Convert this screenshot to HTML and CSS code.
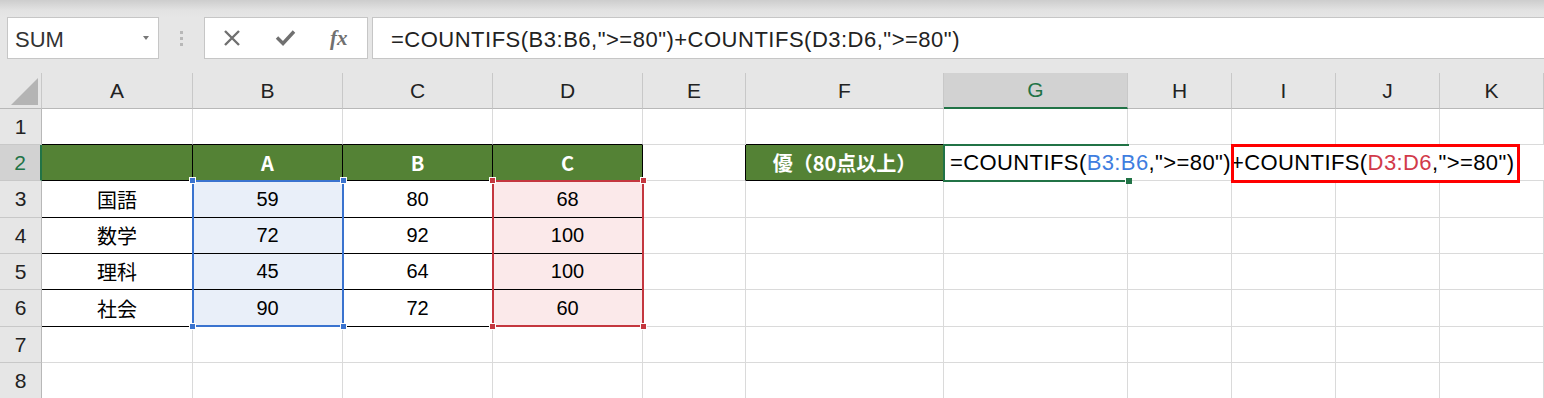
FILE: index.html
```html
<!DOCTYPE html>
<html lang="ja">
<head>
    <meta charset="UTF-8">
    <title>COUNTIFS</title>
    <link rel="stylesheet" href="styles.css">
</head>
<body>
    <div class="topband"></div>

    <!-- 数式バー -->
    <div class="fbar">
        <div class="namebox">SUM<span class="arrow"></span></div>
        <div class="grip"><i></i><i></i><i></i></div>
        <div class="btns">
            <svg width="18" height="18" viewBox="0 0 18 18"><path d="M2 2L16 16M16 2L2 16" stroke="#707070" stroke-width="2.4" fill="none"/></svg>
            <svg width="21" height="18" viewBox="0 0 21 18"><path d="M2 8.5L8 14.5L19 2.5" stroke="#707070" stroke-width="3.4" fill="none"/></svg>
            <span class="fx">fx</span>
        </div>
        <div class="formula">=COUNTIFS(B3:B6,"&gt;=80")+COUNTIFS(D3:D6,"&gt;=80")</div>
    </div>

    <!-- シート -->
    <div class="sheet">
        <div class="hd corner"><span class="tri"></span></div>
        <div class="hd">A</div><div class="hd">B</div><div class="hd">C</div><div class="hd">D</div>
        <div class="hd">E</div><div class="hd">F</div><div class="hd sel">G</div><div class="hd">H</div>
        <div class="hd">I</div><div class="hd">J</div><div class="hd">K</div>

        <div class="rh">1</div>
        <div class="c bk"></div><div class="c bk"></div><div class="c bk"></div><div class="c bk"></div>
        <div class="c"></div><div class="c bk"></div><div class="c"></div><div class="c"></div>
        <div class="c"></div><div class="c"></div><div class="c"></div>

        <div class="rh rsel">2</div>
        <div class="c th"></div><div class="c th">A</div><div class="c th">B</div><div class="c th">C</div>
        <div class="c bk-r"></div><div class="c th">優（80点以上）</div>
        <div class="c edit">=COUNTIFS(<span class="blue">B3:B6</span>,"&gt;=80")+COUNTIFS(<span class="red">D3:D6</span>,"&gt;=80")</div>

        <div class="rh">3</div>
        <div class="c bk">国語</div><div class="c bk rb">59</div><div class="c bk">80</div><div class="c bk rr">68</div>
        <div class="c"></div><div class="c"></div><div class="c"></div><div class="c"></div>
        <div class="c"></div><div class="c"></div><div class="c"></div>

        <div class="rh">4</div>
        <div class="c bk">数学</div><div class="c bk rb">72</div><div class="c bk">92</div><div class="c bk rr">100</div>
        <div class="c"></div><div class="c"></div><div class="c"></div><div class="c"></div>
        <div class="c"></div><div class="c"></div><div class="c"></div>

        <div class="rh">5</div>
        <div class="c bk">理科</div><div class="c bk rb">45</div><div class="c bk">64</div><div class="c bk rr">100</div>
        <div class="c"></div><div class="c"></div><div class="c"></div><div class="c"></div>
        <div class="c"></div><div class="c"></div><div class="c"></div>

        <div class="rh">6</div>
        <div class="c bk">社会</div><div class="c bk rb">90</div><div class="c bk">72</div><div class="c bk rr">60</div>
        <div class="c"></div><div class="c"></div><div class="c"></div><div class="c"></div>
        <div class="c"></div><div class="c"></div><div class="c"></div>

        <div class="rh">7</div>
        <div class="c"></div><div class="c"></div><div class="c"></div><div class="c"></div>
        <div class="c"></div><div class="c"></div><div class="c"></div><div class="c"></div>
        <div class="c"></div><div class="c"></div><div class="c"></div>

        <div class="rh">8</div>
        <div class="c"></div><div class="c"></div><div class="c"></div><div class="c"></div>
        <div class="c"></div><div class="c"></div><div class="c"></div><div class="c"></div>
        <div class="c"></div><div class="c"></div><div class="c"></div>

        <!-- 参照範囲と選択セル -->
        <div class="range range-b"><i class="tl"></i><i class="tr"></i><i class="bl"></i><i class="br"></i></div>
        <div class="range range-d"><i class="tl"></i><i class="tr"></i><i class="bl"></i><i class="br"></i></div>
        <div class="cursor"><i></i></div>
        <div class="mark"></div>
    </div>
</body>
</html>
```

FILE: styles.css
```css
body {
    margin: 0;
    background-color: #e6e6e6;
    font-family: "Liberation Sans", "Noto Sans CJK JP", sans-serif;
    overflow: hidden;
}
.topband {
    height: 17px;
    background: linear-gradient(#cdcdcd, #e2e2e2 60%, #e6e6e6);
}
.fbar {
    display: flex;
    height: 42px;
    padding: 0 0 14px 7px;
}
.namebox {
    position: relative;
    box-sizing: border-box;
    width: 152px;
    height: 42px;
    background: #fff;
    border: 1px solid #c6c6c6;
    padding: 2px 0 0 7px;
    font-size: 22px;
    line-height: 40px;
    color: #333;
}
.arrow {
    position: absolute;
    right: 9px;
    top: 18px;
    border-left: 3px solid transparent;
    border-right: 3px solid transparent;
    border-top: 4px solid #777;
}
.grip {
    width: 45px;
    display: flex;
    flex-direction: column;
    align-items: center;
    justify-content: center;
    gap: 3px;
}
.grip i {
    width: 3px;
    height: 3px;
    background: #b8b8b8;
}
.btns {
    box-sizing: border-box;
    width: 164px;
    height: 42px;
    background: #fff;
    border: 1px solid #c6c6c6;
    display: flex;
    align-items: center;
    gap: 34px;
    padding-left: 18px;
}
.fx {
    font-family: "Liberation Serif", serif;
    font-style: italic;
    font-weight: bold;
    font-size: 21px;
    color: #707070;
}
.formula {
    box-sizing: border-box;
    flex: 1;
    margin-left: 4px;
    margin-right: -2px;
    height: 42px;
    background: #fff;
    border: 1px solid #c6c6c6;
    padding: 2px 0 0 18px;
    font-size: 22px;
    line-height: 40px;
    color: #222;
    letter-spacing: 0.5px;
}
.sheet {
    position: relative;
    display: grid;
    grid-template-columns: 42px 151px 150px 150px 150px 103px 198px 184px 104px 104px 104px 104px;
    grid-template-rows: 36px 36px 36px 37px 36px 36px 37px 36px 36px;
    background: #fff;
}
.sheet > div {
    box-sizing: border-box;
    display: flex;
    align-items: center;
    justify-content: center;
    white-space: nowrap;
}
.hd {
    background: #e6e6e6;
    border-right: 1px solid #c8c8c8;
    border-bottom: 1px solid #b8b8b8;
    font-size: 21px;
    color: #222;
}
.hd.sel {
    background: #d2d2d2;
    color: #217346;
    border-bottom: 2px solid #217346;
}
.corner {
    position: relative;
}
.tri {
    position: absolute;
    right: 3px;
    bottom: 3px;
    border-left: 27px solid transparent;
    border-bottom: 27px solid #b4b4b4;
}
.rh {
    background: #e6e6e6;
    border-right: 1px solid #b8b8b8;
    border-bottom: 1px solid #c8c8c8;
    font-size: 21px;
    color: #222;
}
.rh.rsel {
    background: #d2d2d2;
    color: #217346;
    border-right: 2px solid #217346;
}
.c {
    border-right: 1px solid #dadada;
    border-bottom: 1px solid #dadada;
    font-size: 20px;
    color: #000;
}
.c.bk {
    border-bottom-color: #000;
}
.c.bk-r {
    border-right-color: #000;
}
.c.th {
    background: #548235;
    border-right-color: #000;
    border-bottom-color: #000;
    color: #fff;
    font-weight: bold;
    font-family: "Noto Sans CJK JP", sans-serif;
    font-size: 20px;
}
.c.rb {
    background: #e9eff9;
}
.c.rr {
    background: #fbe9ea;
}
.c.edit {
    grid-column: 8 / span 5;
    justify-content: flex-start;
    padding-left: 6px;
    border-right: none;
    font-size: 22px;
    letter-spacing: 0.4px;
}
.blue {
    color: #3f7ee0;
}
.red {
    color: #d23a4a;
}
.range {
    position: absolute;
    top: 107px;
    width: 152px;
    height: 147px;
    box-sizing: border-box;
    border: 2px solid #3a73cf;
}
.range-b {
    left: 192px;
}
.range-d {
    left: 492px;
    border-color: #c4373f;
}
.range i {
    position: absolute;
    width: 5px;
    height: 5px;
    background: #3a73cf;
    border: 1px solid #fff;
}
.range-d i {
    background: #c4373f;
}
.range .tl { left: -5px; top: -5px; }
.range .tr { right: -5px; top: -5px; }
.range .bl { left: -5px; bottom: -5px; }
.range .br { right: -5px; bottom: -5px; }
.cursor {
    position: absolute;
    left: 943px;
    top: 71px;
    width: 186px;
    height: 38px;
    box-sizing: border-box;
    border: 2px solid #217346;
    border-right: none;
}
.cursor i {
    position: absolute;
    right: -3px;
    bottom: -4px;
    width: 6px;
    height: 6px;
    background: #217346;
    border-left: 1px solid #fff;
    border-top: 1px solid #fff;
}
.mark {
    position: absolute;
    left: 1231px;
    top: 71px;
    width: 289px;
    height: 39px;
    box-sizing: border-box;
    border: 3px solid #ff0000;
}
```
